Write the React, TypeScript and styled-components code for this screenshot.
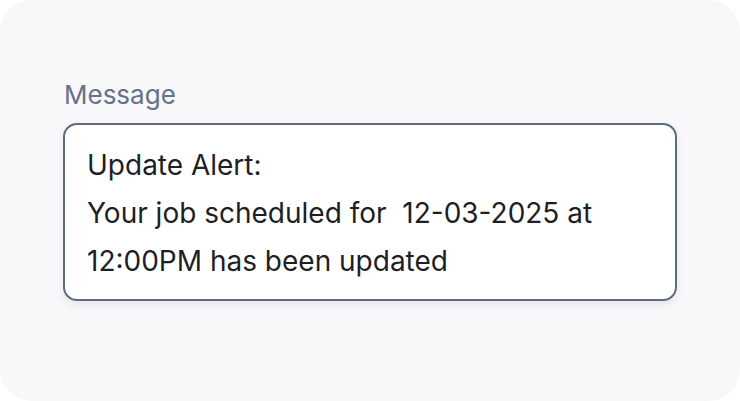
import React from 'react';
import styled, { createGlobalStyle } from 'styled-components';

const GlobalStyle = createGlobalStyle`
  html, body {
    margin:0;
    padding:0;
    background:#FFFFFF;
  }
  body {
    font-family:Inter, "Noto Sans", "Liberation Sans", sans-serif;
  }
`;

const Card = styled.section`
  width:740px;
  height:401px;
  box-sizing:border-box;
  background:#F8F8FA;
  border-radius:32px;
  padding:78px 63px 0 63px;
  display:flex;
  flex-direction:column;
`;

const Label = styled.label`
  font-size:26px;
  line-height:34px;
  color:#66718A;
  margin:0 0 11px 1px;
`;

const MessageBox = styled.div`
  box-sizing:border-box;
  width:614px;
  height:178px;
  background:#FFFFFF;
  border:2px solid #5E6A80;
  border-radius:14px;
  box-shadow:0 4px 8px rgba(30,40,60,0.08);
  padding:16px 22px 14px 22px;
  font-size:28px;
  line-height:48px;
  color:#1E1F24;
  white-space:pre-wrap;
`;

export default function App() {
  return (
    <>
      <GlobalStyle />
      <Card>
        <Label>Message</Label>
        <MessageBox>
          {'Update Alert:\nYour job scheduled for  12-03-2025 at\n12:00PM has been updated'}
        </MessageBox>
      </Card>
    </>
  );
}
